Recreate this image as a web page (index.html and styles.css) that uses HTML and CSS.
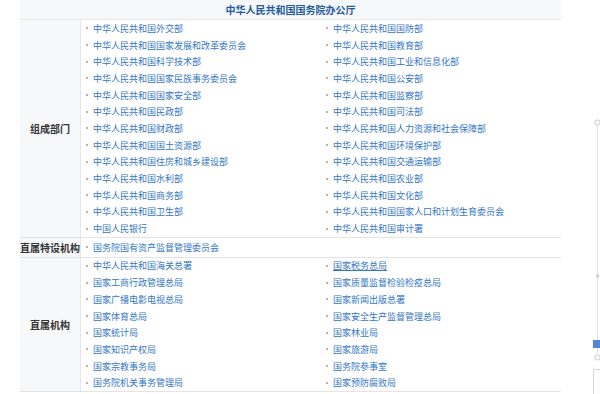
FILE: index.html
```html
<!DOCTYPE html>
<html lang="zh-CN">
<head>
<meta charset="utf-8">
<title>国务院机构</title>
<link rel="stylesheet" href="styles.css">
</head>
<body>
<div class="wrap">
  <div class="title">中华人民共和国国务院办公厅</div>
  <div class="sec">
    <div class="label">组成部门</div>
    <ul class="links">
      <li><a href="#">中华人民共和国外交部</a></li>
      <li><a href="#">中华人民共和国国防部</a></li>
      <li><a href="#">中华人民共和国国家发展和改革委员会</a></li>
      <li><a href="#">中华人民共和国教育部</a></li>
      <li><a href="#">中华人民共和国科学技术部</a></li>
      <li><a href="#">中华人民共和国工业和信息化部</a></li>
      <li><a href="#">中华人民共和国国家民族事务委员会</a></li>
      <li><a href="#">中华人民共和国公安部</a></li>
      <li><a href="#">中华人民共和国国家安全部</a></li>
      <li><a href="#">中华人民共和国监察部</a></li>
      <li><a href="#">中华人民共和国民政部</a></li>
      <li><a href="#">中华人民共和国司法部</a></li>
      <li><a href="#">中华人民共和国财政部</a></li>
      <li><a href="#">中华人民共和国人力资源和社会保障部</a></li>
      <li><a href="#">中华人民共和国国土资源部</a></li>
      <li><a href="#">中华人民共和国环境保护部</a></li>
      <li><a href="#">中华人民共和国住房和城乡建设部</a></li>
      <li><a href="#">中华人民共和国交通运输部</a></li>
      <li><a href="#">中华人民共和国水利部</a></li>
      <li><a href="#">中华人民共和国农业部</a></li>
      <li><a href="#">中华人民共和国商务部</a></li>
      <li><a href="#">中华人民共和国文化部</a></li>
      <li><a href="#">中华人民共和国卫生部</a></li>
      <li><a href="#">中华人民共和国国家人口和计划生育委员会</a></li>
      <li><a href="#">中国人民银行</a></li>
      <li><a href="#">中华人民共和国审计署</a></li>
    </ul>
  </div>
  <div class="sec sec-single">
    <div class="label">直属特设机构</div>
    <ul class="links">
      <li><a href="#">国务院国有资产监督管理委员会</a></li>
    </ul>
  </div>
  <div class="sec">
    <div class="label">直属机构</div>
    <ul class="links">
      <li><a href="#">中华人民共和国海关总署</a></li>
      <li><a href="#" class="active">国家税务总局</a></li>
      <li><a href="#">国家工商行政管理总局</a></li>
      <li><a href="#">国家质量监督检验检疫总局</a></li>
      <li><a href="#">国家广播电影电视总局</a></li>
      <li><a href="#">国家新闻出版总署</a></li>
      <li><a href="#">国家体育总局</a></li>
      <li><a href="#">国家安全生产监督管理总局</a></li>
      <li><a href="#">国家统计局</a></li>
      <li><a href="#">国家林业局</a></li>
      <li><a href="#">国家知识产权局</a></li>
      <li><a href="#">国家旅游局</a></li>
      <li><a href="#">国家宗教事务局</a></li>
      <li><a href="#">国务院参事室</a></li>
      <li><a href="#">国务院机关事务管理局</a></li>
      <li><a href="#">国家预防腐败局</a></li>
    </ul>
  </div>
</div>
<svg class="slider" width="14" height="279" viewBox="0 0 14 279">
  <line x1="9.5" y1="10" x2="9.5" y2="239" stroke="#e2e2e2" stroke-width="1"/>
  <circle cx="9.5" cy="7.5" r="2.6" fill="#fff" stroke="#c8c8c8" stroke-width="1"/>
  <circle cx="9.5" cy="161" r="1.8" fill="#d0d0d0"/>
  <rect x="5" y="225" width="9" height="8" fill="#4a88d2"/>
  <circle cx="9.5" cy="242.5" r="2.6" fill="#fff" stroke="#c8c8c8" stroke-width="1"/>
  <rect x="5.5" y="254.5" width="9" height="30" fill="#fff" stroke="#d6d6d6" stroke-width="1"/>
</svg>
</body>
</html>
```
FILE: styles.css
```css
html, body {
  margin: 0;
  padding: 0;
  background: #fff;
}
body {
  font-family: "Noto Sans CJK SC", "Noto Sans", sans-serif;
  width: 600px;
  height: 394px;
  overflow: hidden;
  position: relative;
}
.wrap {
  margin-left: 20px;
  width: 541px;
}
.title {
  height: 19px;
  line-height: 19px;
  background: #f7f8fa;
  border-bottom: 1px solid #e6e8eb;
  text-align: center;
  font-weight: bold;
  font-size: 10px;
  color: #1f5a9c;
}
.sec {
  display: flex;
  border-bottom: 1px solid #e4e4e4;
}
.label {
  width: 60px;
  flex: none;
  border-right: 1px solid #e6e6e6;
  background: #f7f8fa;
  display: flex;
  align-items: center;
  justify-content: center;
  font-weight: bold;
  font-size: 10px;
  color: #333;
  white-space: nowrap;
}
.links {
  list-style: none;
  margin: 0;
  padding: 0;
  display: grid;
  grid-template-columns: 240px 240px;
}
.sec-single .links {
  padding: 1px 0;
}
.links li {
  height: 16.7px;
  display: flex;
  align-items: center;
  font-size: 9px;
  white-space: nowrap;
}
.links li::before {
  content: "";
  width: 2px;
  height: 2px;
  background: #b4b4b4;
  margin: 0 5px 0 5px;
  flex: none;
}
.links a {
  color: #3476c4;
  text-decoration: none;
}
.links a.active {
  text-decoration: underline;
}
.slider {
  position: absolute;
  left: 588px;
  top: 115px;
}
```
